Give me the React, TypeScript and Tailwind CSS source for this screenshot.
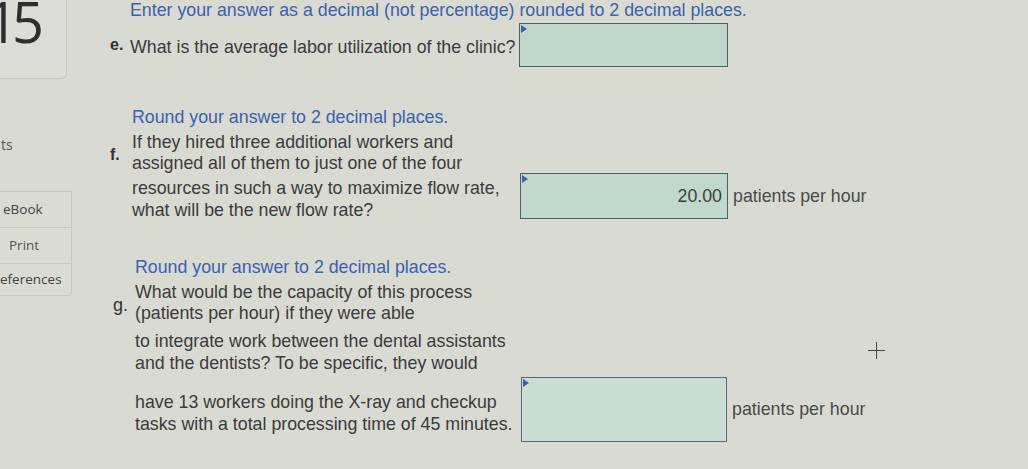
import React from "react";

function Flag() {
  return (
    <span className="absolute left-[1px] top-[1px] w-0 h-0 border-t-[4px] border-b-[4px] border-l-[6px] border-t-transparent border-b-transparent border-l-[#3d63a8]" />
  );
}

export default function App() {
  return (
    <div
      className="relative w-[1028px] h-[469px] overflow-hidden bg-[#d9dad2] flex text-[#3b3b3b]"
      style={{ fontFamily: '"Liberation Sans", Arial, sans-serif' }}
    >
      {/* sidebar */}
      <div className="w-[72px] shrink-0 flex flex-col">
        <div className="-ml-[30px] w-[97px] h-[79px] border-r border-b border-[#c6c7bf] rounded-br-[6px] bg-[#dcddd6] flex items-start overflow-hidden">
          <span
            className="ml-[16px] -mt-[7px] text-[56px] leading-[56px] tracking-[-6px] text-[#2e2e2e]"
            style={{ fontFamily: '"Open Sans", sans-serif', fontWeight: 400 }}
          >
            15
          </span>
        </div>
        <div className="mt-[56px] ml-[1px] text-[14px] leading-[20px] text-[#555]" style={{ fontFamily: '"Open Sans", sans-serif' }}>
          ts
        </div>
        <div
          className="mt-[36px] -ml-[24px] w-[96px] border border-[#c6c7bf] rounded-br-[4px] bg-[#dadbd3] flex flex-col text-[13.5px] text-[#444]"
          style={{ fontFamily: '"Open Sans", sans-serif' }}
        >
          <div className="h-[36px] flex items-center pl-[26px] border-b border-[#c6c7bf]">eBook</div>
          <div className="h-[36px] flex items-center pl-[32px] border-b border-[#c6c7bf] text-[#555]">Print</div>
          <div className="h-[31px] flex items-center pl-[23px]">eferences</div>
        </div>
      </div>

      {/* main */}
      <div className="ml-[38px] flex flex-col text-[17.8px]">
        {/* e */}
        <div className="pl-[20px] leading-[20px] text-[#3a62ad] whitespace-nowrap">
          Enter your answer as a decimal (not percentage) rounded to 2 decimal places.
        </div>
        <div className="mt-[3px] flex items-center h-[44px]">
          <span className="w-[20px] font-bold text-[16px] text-[#333]">e.</span>
          <span className="w-[389px] leading-[20px] pt-[4px] whitespace-nowrap">What is the average labor utilization of the clinic?</span>
          <div className="relative w-[209px] h-[44px] bg-[#bfd8cb] border border-[#4e5f64]">
            <Flag />
          </div>
        </div>

        {/* f */}
        <div className="mt-[39px] pl-[22px] leading-[22px] text-[#3a62ad]">
          Round your answer to 2 decimal places.
        </div>
        <div className="flex items-start">
          <div className="w-[410px] flex flex-col whitespace-nowrap">
            <div className="mt-[4px] flex items-center">
              <span className="w-[22px] font-bold text-[16px] text-[#333] pt-[3px]">f.</span>
              <div className="leading-[21px]">
                If they hired three additional workers and
                <br />
                assigned all of them to just one of the four
              </div>
            </div>
            <div className="mt-[3px] pl-[22px] leading-[22px]">
              resources in such a way to maximize flow rate,
              <br />
              what will be the new flow rate?
            </div>
          </div>
          <div className="mt-[45px] flex items-center">
            <div className="relative w-[208px] h-[46px] bg-[#c0d9cc] border border-[#4e5f64] flex items-center justify-end pr-[5px] text-[#3d3d3d]">
              <Flag />
              20.00
            </div>
            <span className="ml-[5px] text-[#4a4a4a] whitespace-nowrap">patients per hour</span>
          </div>
        </div>

        {/* g */}
        <div className="mt-[35px] pl-[25px] leading-[22px] text-[#3a62ad]">
          Round your answer to 2 decimal places.
        </div>
        <div className="flex items-start">
          <div className="w-[411px] flex flex-col whitespace-nowrap">
            <div className="mt-[4px] flex items-center">
              <span className="w-[25px] pl-[3px] text-[18px] text-[#333] pt-[4px]">g.</span>
              <div className="leading-[21px]">
                What would be the capacity of this process
                <br />
                (patients per hour) if they were able
              </div>
            </div>
            <div className="mt-[6px] pl-[25px] leading-[22px]">
              to integrate work between the dental assistants
              <br />
              and the dentists? To be specific, they would
            </div>
            <div className="mt-[17px] pl-[25px] leading-[22px]">
              have 13 workers doing the X-ray and checkup
              <br />
              tasks with a total processing time of 45 minutes.
            </div>
          </div>
          <div className="mt-[99px] flex items-center">
            <div className="relative w-[206px] h-[65px] bg-[#cbded4] border border-[#55687a]">
              <Flag />
            </div>
            <span className="ml-[5px] text-[#4a4a4a] whitespace-nowrap">patients per hour</span>
          </div>
        </div>
      </div>

      {/* cursor cross */}
      <div className="absolute left-[868px] top-[342px] w-[17px] h-[17px]">
        <div className="absolute left-[8px] top-0 w-[1px] h-[17px] bg-[#444]" />
        <div className="absolute left-0 top-[8px] w-[17px] h-[1px] bg-[#444]" />
      </div>
    </div>
  );
}
